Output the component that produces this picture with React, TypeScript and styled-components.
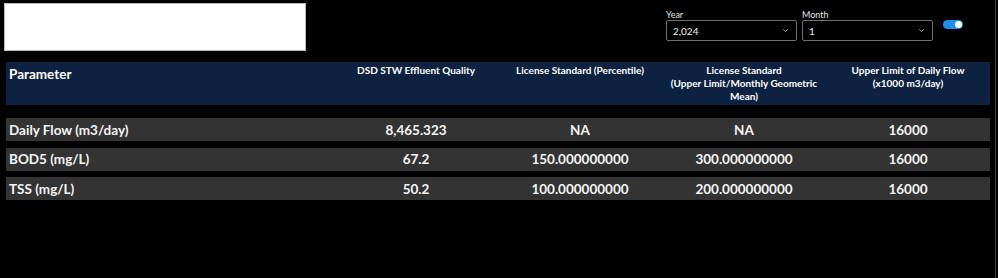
import React from "react";
import styled, { createGlobalStyle } from "styled-components";
import { ChevronDown } from "lucide-react";

const Global = createGlobalStyle`
  html, body { margin: 0; padding: 0; background: #000; }
  body { font-family: Lato, "Open Sans", sans-serif; color: #fff; }
`;

const Page = styled.div`
  width: 995px;
  height: 278px;
  background: #000;
  border-right: 1px solid #4a4a4a;
  display: flex;
  flex-direction: column;
  overflow: hidden;
`;

const TopBar = styled.div`
  display: flex;
  align-items: flex-start;
  padding: 3px 0 0 4px;
  height: 52px;
`;

const Logo = styled.div`
  width: 300px;
  height: 46px;
  background: #fff;
  border: 1px solid #bbb;
`;

const Filters = styled.div`
  display: flex;
  align-items: flex-start;
  gap: 5px;
  margin-left: 360px;
  padding-top: 6px;
`;

const Field = styled.div`
  display: flex;
  flex-direction: column;
  width: 131px;
`;

const Label = styled.div`
  font-size: 9px;
  color: #e6e6e6;
  line-height: 11px;
  height: 11px;
`;

const Select = styled.div`
  box-sizing: border-box;
  height: 21px;
  border: 1px solid #707070;
  border-radius: 2px;
  display: flex;
  align-items: center;
  justify-content: space-between;
  padding: 0 6px;
  font-size: 10px;
  color: #f2f2f2;
  svg { color: #bbb; }
`;

const Toggle = styled.div`
  width: 18px;
  height: 9px;
  border-radius: 5px;
  background: #1f8ef1;
  margin-top: 11px;
  margin-left: 5px;
  display: flex;
  align-items: center;
  justify-content: flex-end;
  padding: 0 1px;
  &::after {
    content: "";
    width: 7px;
    height: 7px;
    border-radius: 50%;
    background: #fff;
  }
`;

const Table = styled.div`
  margin: 7px 0 0 6px;
  width: 984px;
  display: flex;
  flex-direction: column;
`;

const cols = "2fr 1fr 1fr 1fr 1fr";

const HeaderRow = styled.div`
  display: grid;
  grid-template-columns: ${cols};
  height: 43px;
  background: #0c2240;
  margin-bottom: 13px;
`;

const HeadCell = styled.div<{ $first?: boolean }>`
  font-weight: 700;
  font-size: ${(p) => (p.$first ? "13.5px" : "10px")};
  line-height: ${(p) => (p.$first ? "16px" : "13px")};
  text-align: ${(p) => (p.$first ? "left" : "center")};
  padding: ${(p) => (p.$first ? "4px 0 0 3px" : "2px 7px 0")};
  color: #fff;
`;

const Row = styled.div`
  display: grid;
  grid-template-columns: ${cols};
  height: 23px;
  background: #333333;
  align-items: center;
  & + & { margin-top: 6.5px; }
`;

const Cell = styled.div<{ $first?: boolean }>`
  font-weight: 700;
  font-size: 13.5px;
  text-align: ${(p) => (p.$first ? "left" : "center")};
  padding-left: ${(p) => (p.$first ? "3px" : "0")};
  color: #f5f5f5;
`;

const headers: React.ReactNode[] = [
  "Parameter",
  "DSD STW Effluent Quality",
  "License Standard (Percentile)",
  <>
    License Standard
    <br />
    (Upper Limit/Monthly Geometric Mean)
  </>,
  <>
    Upper Limit of Daily Flow
    <br />
    (x1000 m3/day)
  </>,
];

const rows = [
  ["Daily Flow (m3/day)", "8,465.323", "NA", "NA", "16000"],
  ["BOD5 (mg/L)", "67.2", "150.000000000", "300.000000000", "16000"],
  ["TSS (mg/L)", "50.2", "100.000000000", "200.000000000", "16000"],
];

export default function App() {
  return (
    <>
      <Global />
      <Page>
        <TopBar>
          <Logo />
          <Filters>
            <Field>
              <Label>Year</Label>
              <Select>
                <span>2,024</span>
                <ChevronDown size={9} strokeWidth={2} />
              </Select>
            </Field>
            <Field>
              <Label>Month</Label>
              <Select>
                <span>1</span>
                <ChevronDown size={9} strokeWidth={2} />
              </Select>
            </Field>
            <Toggle />
          </Filters>
        </TopBar>
        <Table>
          <HeaderRow>
            {headers.map((h, i) => (
              <HeadCell key={i} $first={i === 0}>
                {h}
              </HeadCell>
            ))}
          </HeaderRow>
          {rows.map((r, ri) => (
            <Row key={ri}>
              {r.map((c, ci) => (
                <Cell key={ci} $first={ci === 0}>
                  {c}
                </Cell>
              ))}
            </Row>
          ))}
        </Table>
      </Page>
    </>
  );
}
